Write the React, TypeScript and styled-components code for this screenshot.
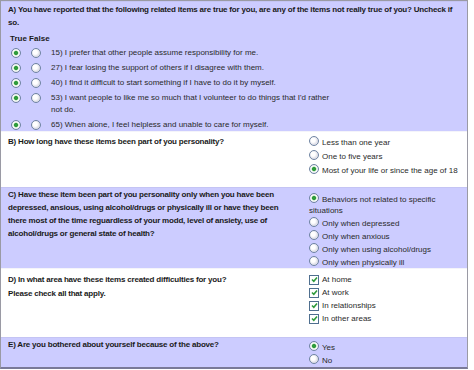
import styled, { createGlobalStyle } from 'styled-components'

const GlobalStyle = createGlobalStyle`
	html, body {
		margin: 0;
		padding: 0;
		background: #ffffff;
	}
	body {
		font-family: 'Liberation Sans', Arial, sans-serif;
		font-size: 8px;
		color: #1a1a1a;
	}
`

const Frame = styled.div`
	width: 466px;
	border: 1px solid #9a9aa4;
	border-bottom: 2px solid #7a7a98;
	background: #ffffff;
`

const Section = styled.div<{ $tint?: boolean; $h: number }>`
	display: grid;
	grid-template-columns: 300px 1fr;
	height: ${({ $h }) => $h}px;
	background: ${({ $tint }) => ($tint ? '#ccccff' : '#ffffff')};
	border-top: 1px solid ${({ $tint }) => ($tint ? '#c4c4f4' : '#f4f4fa')};
	box-sizing: border-box;
	overflow: hidden;
`

const FullSection = styled(Section)`
	display: block;
`

const Question = styled.div<{ $pt?: number; $lh?: number }>`
	font-weight: bold;
	letter-spacing: -0.2px;
	line-height: ${({ $lh }) => $lh ?? 14}px;
	padding: ${({ $pt }) => $pt ?? 5}px 14px 0 7px;
`

const WideQuestion = styled(Question)`
	padding-right: 10px;
`

const TrueFalse = styled.div`
	font-weight: bold;
	line-height: 12px;
	padding: 4px 0 2px 9px;
`

const ItemRow = styled.div`
	display: grid;
	grid-template-columns: 20px 20px 290px;
	align-items: start;
	padding-left: 10px;
	margin-bottom: 3px;
	line-height: 12px;
	color: #2a2a2a;
`

const RadioCell = styled.div`
	display: flex;
	align-items: center;
	height: 12px;
`

const Radio = styled.span<{ $checked?: boolean }>`
	display: inline-block;
	flex: none;
	width: 8px;
	height: 8px;
	border-radius: 50%;
	border: 1px solid #6f84a2;
	background: ${({ $checked }) =>
		$checked
			? 'radial-gradient(circle, #2f9b3c 0 1.8px, #bfe5bf 2.3px, #ffffff 3px, #e6e6ee 4px)'
			: 'radial-gradient(circle at 40% 40%, #ffffff 0 2px, #e2e2ea 4px)'};
`

const Box = styled.span`
	display: inline-flex;
	flex: none;
	width: 8px;
	height: 8px;
	border: 1px solid #4f6f8f;
	background: #ffffff;
	align-items: center;
	justify-content: center;
`

const Answers = styled.div<{ $pt?: number }>`
	display: flex;
	flex-direction: column;
	padding: ${({ $pt }) => $pt ?? 5}px 6px 0 8px;
`

const Option = styled.div<{ $gap?: number }>`
	line-height: ${({ $gap }) => $gap ?? 14}px;
	color: #2a2a2a;

	${Radio}, ${Box} {
		vertical-align: -1px;
		margin-right: 3px;
	}
`

const WrapOption = styled(Option)`
	line-height: 11px;
	padding: 2px 0 1px;
`

const Check = () => (
	<Box>
		<svg width='7' height='7' viewBox='0 0 7 7'>
			<path d='M1 3.5 L2.8 5.3 L6 1.5' fill='none' stroke='#2f9b3c' strokeWidth='1.6' />
		</svg>
	</Box>
)

const items = [
	'15) I prefer that other people assume responsibility for me.',
	'27) I fear losing the support of others if I disagree with them.',
	'40) I find it difficult to start something if I have to do it by myself.',
	"53) I want people to like me so much that I volunteer to do things that I'd rather not do.",
	'65) When alone, I feel helpless and unable to care for myself.',
]

const App = () => {
	return (
		<>
			<GlobalStyle />
			<Frame>
				<FullSection $tint $h={130}>
					<WideQuestion $pt={1} $lh={13}>
						A) You have reported that the following related items are true for you, are any of the items not
						really true of you? Uncheck if so.
					</WideQuestion>
					<TrueFalse>True False</TrueFalse>
					{items.map((text) => (
						<ItemRow key={text}>
							<RadioCell>
								<Radio $checked />
							</RadioCell>
							<RadioCell>
								<Radio />
							</RadioCell>
							<span>{text}</span>
						</ItemRow>
					))}
				</FullSection>

				<Section $h={56}>
					<Question $pt={3}>B) How long have these items been part of you personality?</Question>
					<Answers $pt={4}>
						<Option>
							<Radio />
							Less than one year
						</Option>
						<Option>
							<Radio />
							One to five years
						</Option>
						<Option>
							<Radio $checked />
							Most of your life or since the age of 18
						</Option>
					</Answers>
				</Section>

				<Section $tint $h={81}>
					<Question $pt={0} $lh={13}>
						C) Have these item been part of you personality only when you have been depressed, ansious,
						using alcohol/drugs or physically ill or have they been there most of the time reguardless of
						your modd, level of ansiety, use of alcohol/drugs or general state of health?
					</Question>
					<Answers $pt={3}>
						<WrapOption>
							<Radio $checked />
							Behaviors not related to specific situations
						</WrapOption>
						<Option $gap={12}>
							<Radio />
							Only when depressed
						</Option>
						<Option $gap={12}>
							<Radio />
							Only when anxious
						</Option>
						<Option $gap={12}>
							<Radio />
							Only when using alcohol/drugs
						</Option>
						<Option $gap={12}>
							<Radio />
							Only when physically ill
						</Option>
					</Answers>
				</Section>

				<Section $h={69}>
					<Question $pt={4}>
						D) In what area have these items created difficulties for you?
						<br />
						Please check all that apply.
					</Question>
					<Answers $pt={4}>
						<Option $gap={13}>
							<Check />
							At home
						</Option>
						<Option $gap={13}>
							<Check />
							At work
						</Option>
						<Option $gap={13}>
							<Check />
							In relationships
						</Option>
						<Option $gap={13}>
							<Check />
							In other areas
						</Option>
					</Answers>
				</Section>

				<Section $tint $h={30}>
					<Question $pt={0}>E) Are you bothered about yourself because of the above?</Question>
					<Answers $pt={3}>
						<Option $gap={12}>
							<Radio $checked />
							Yes
						</Option>
						<Option $gap={12}>
							<Radio />
							No
						</Option>
					</Answers>
				</Section>
			</Frame>
		</>
	)
}

export default App
